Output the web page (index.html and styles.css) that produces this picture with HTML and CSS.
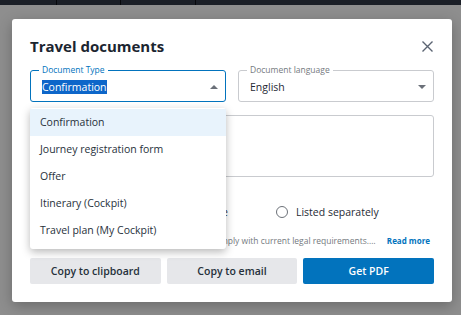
FILE: index.html
```html
<!DOCTYPE html>
<html>
<head>
    <title>Travel documents</title>
    <link rel="stylesheet" href="styles.css">
</head>
<body>
    <!-- Barra superior de la página (atenuada) -->
    <div class="topbar">
        <span class="topbar-cell" style="width: 57px"></span>
        <span class="topbar-cell" style="width: 64px"></span>
        <span class="topbar-cell" style="width: 75px"></span>
        <span class="topbar-cell topbar-rest"></span>
    </div>

    <div class="modal">
        <div class="modal-header">
            <h1>Travel documents</h1>
            <button class="close-btn" aria-label="Close">
                <svg width="11" height="11" viewBox="0 0 11 11">
                    <path d="M0.5 0.5 L10.5 10.5 M10.5 0.5 L0.5 10.5" stroke="#5b6472" stroke-width="1.4" fill="none"/>
                </svg>
            </button>
        </div>

        <div class="field-row">
            <div class="field field-active">
                <label class="field-label">Document Type</label>
                <div class="field-value"><span class="selected-text">Confirmation</span></div>
                <span class="caret caret-up"></span>

                <!-- Menú desplegable -->
                <ul class="menu">
                    <li class="menu-item is-highlighted">Confirmation</li>
                    <li class="menu-item">Journey registration form</li>
                    <li class="menu-item">Offer</li>
                    <li class="menu-item">Itinerary (Cockpit)</li>
                    <li class="menu-item">Travel plan (My Cockpit)</li>
                </ul>
            </div>
            <div class="field">
                <label class="field-label">Document language</label>
                <div class="field-value">English</div>
                <span class="caret caret-down"></span>
            </div>
        </div>

        <div class="textarea-box"></div>

        <div class="radio-row">
            <label class="radio"><span class="radio-dot checked"></span>All documents combined in one file</label>
            <label class="radio"><span class="radio-dot"></span>Listed separately</label>
        </div>

        <div class="notice">
            <span class="notice-text">Please note: all of the travel documents must comply with current legal requirements. The documents are generated automatically.</span>
            <a class="read-more" href="#">Read more</a>
        </div>

        <div class="actions">
            <button class="btn btn-secondary">Copy to clipboard</button>
            <button class="btn btn-secondary">Copy to email</button>
            <button class="btn btn-primary">Get PDF</button>
        </div>
    </div>
</body>
</html>
```

FILE: styles.css
```css
/* Estilos generales */
:root {
    --azul: #0273bd;
    --azul-sel: #0d66c9;
    --azul-hover: #e8f3fc;
    --texto: #1f2a35;
    --gris-borde: #c9cbcf;
    --gris-boton: #e6e7ea;
    --gris-texto: #757a80;
}

* {
    margin: 0;
    padding: 0;
    box-sizing: border-box;
    font-family: 'Open Sans', 'Noto Sans', sans-serif;
}

body {
    background: #8e8e8e;
    width: 461px;
    height: 315px;
    overflow: hidden;
    color: var(--texto);
}

/* Barra superior */
.topbar {
    display: flex;
    height: 5px;
    background: #1b1f27;
}

.topbar-cell {
    height: 100%;
    border-right: 1px solid #07080b;
}

.topbar-rest {
    flex: 1;
    border-right: none;
}

/* Modal */
.modal {
    width: 440px;
    margin: 14px 0 0 12px;
    background: #fff;
    border-radius: 3px;
    box-shadow: 0 4px 14px rgba(0, 0, 0, 0.25);
    padding: 15px 18px 18px;
}

.modal-header {
    display: flex;
    justify-content: space-between;
    align-items: center;
    height: 24px;
    margin-bottom: 12px;
}

.modal-header h1 {
    font-size: 15px;
    font-weight: 700;
    line-height: 24px;
    color: #1b2530;
}

.close-btn {
    background: none;
    border: none;
    width: 11px;
    height: 11px;
    margin-right: 1px;
    display: flex;
}

/* Campos */
.field-row {
    display: grid;
    grid-template-columns: 1fr 1fr;
    gap: 12px;
}

.field {
    position: relative;
    height: 32px;
    border: 1px solid var(--gris-borde);
    border-radius: 3px;
    display: flex;
    align-items: center;
    padding: 0 11px;
}

.field-active {
    border-color: var(--azul);
}

.field-label {
    position: absolute;
    top: -7px;
    left: 8px;
    padding: 0 3px;
    background: #fff;
    font-size: 8.5px;
    line-height: 12px;
    color: var(--gris-texto);
}

.field-active .field-label {
    color: var(--azul);
}

.field-value {
    font-size: 10.5px;
    line-height: 14px;
    margin-top: 1px;
}

.selected-text {
    background: var(--azul-sel);
    color: #fff;
}

.caret {
    position: absolute;
    right: 7px;
    top: 14px;
    width: 0;
    height: 0;
    border-left: 4px solid transparent;
    border-right: 4px solid transparent;
}

.caret-up {
    border-bottom: 4px solid #6b7079;
}

.caret-down {
    border-top: 4px solid #6b7079;
}

/* Menú desplegable */
.menu {
    position: absolute;
    top: 37px;
    left: -1px;
    right: -1px;
    list-style: none;
    background: #fff;
    border-radius: 3px;
    padding: 1px 0 5px;
    box-shadow: 0 3px 9px rgba(0, 0, 0, 0.28);
    z-index: 10;
}

.menu-item {
    height: 27px;
    line-height: 27px;
    padding-left: 10px;
    font-size: 10.5px;
    color: #27313b;
}

.menu-item.is-highlighted {
    background: var(--azul-hover);
}

/* Área de texto */
.textarea-box {
    height: 62px;
    margin-top: 13px;
    border: 1px solid var(--gris-borde);
    border-radius: 3px;
}

/* Opciones */
.radio-row {
    display: flex;
    gap: 48px;
    margin-top: 28px;
    padding-left: 6px;
    height: 14px;
    align-items: center;
}

.radio {
    display: flex;
    align-items: center;
    gap: 8px;
    font-size: 10.5px;
    color: #1f2a35;
}

.radio-dot {
    width: 12px;
    height: 12px;
    border: 1px solid #6c7178;
    border-radius: 50%;
}

.radio-dot.checked {
    border: 4px solid #e39b1d;
}

/* Aviso */
.notice {
    display: flex;
    align-items: center;
    gap: 9px;
    margin-top: 15px;
    height: 12px;
}

.notice-text {
    flex: 1;
    font-size: 8.5px;
    color: var(--gris-texto);
    white-space: nowrap;
    overflow: hidden;
    text-overflow: ellipsis;
    min-width: 0;
}

.read-more {
    font-size: 8px;
    font-weight: 700;
    color: var(--azul);
    text-decoration: none;
    margin-right: 4px;
}

/* Botones */
.actions {
    display: grid;
    grid-template-columns: repeat(3, 1fr);
    gap: 6px;
    margin-top: 12px;
}

.btn {
    height: 26px;
    border: none;
    border-radius: 2px;
    font-size: 10.5px;
    font-weight: 600;
}

.btn-secondary {
    background: var(--gris-boton);
    color: #25303a;
}

.btn-primary {
    background: var(--azul);
    color: #fff;
}
```
